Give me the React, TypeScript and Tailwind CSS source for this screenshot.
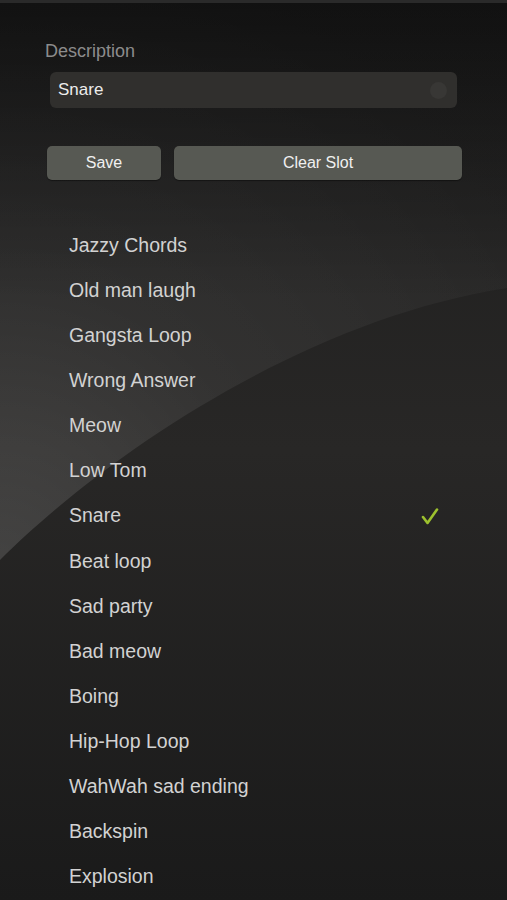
import { useState } from "react"

const sounds = [
  "Jazzy Chords",
  "Old man laugh",
  "Gangsta Loop",
  "Wrong Answer",
  "Meow",
  "Low Tom",
  "Snare",
  "Beat loop",
  "Sad party",
  "Bad meow",
  "Boing",
  "Hip-Hop Loop",
  "WahWah sad ending",
  "Backspin",
  "Explosion",
]

// glossy sweep behind the panel
function Gloss() {
  return (
    <svg className="absolute inset-0 h-full w-full" viewBox="0 0 507 900" preserveAspectRatio="none">
      <defs>
        <radialGradient id="gl" cx="0" cy="560" r="620" gradientUnits="userSpaceOnUse">
          <stop offset="0" stopColor="#ffffff" stopOpacity="0.14" />
          <stop offset="0.45" stopColor="#ffffff" stopOpacity="0.06" />
          <stop offset="1" stopColor="#ffffff" stopOpacity="0.025" />
        </radialGradient>
        <linearGradient id="fade" x1="0" y1="0" x2="0" y2="1">
          <stop offset="0" stopColor="#000" stopOpacity="0.5" />
          <stop offset="0.5" stopColor="#000" stopOpacity="0" />
        </linearGradient>
      </defs>
      <path d="M0,0 L0,560 C100,460 300,320 507,288 L507,0 Z" fill="url(#gl)" />
      <rect x="0" y="0" width="507" height="600" fill="url(#fade)" />
    </svg>
  )
}

function Check() {
  return (
    <svg width="18" height="17" viewBox="0 0 18 17" fill="none">
      <path d="M2 9 L6.5 15 L16 1.5" stroke="#9dc12e" strokeWidth="2.6" strokeLinecap="round" strokeLinejoin="round" />
    </svg>
  )
}

export default function App() {
  const [desc, setDesc] = useState("Snare")
  const [selected, setSelected] = useState("Snare")

  return (
    <div
      className="relative h-[900px] w-full overflow-hidden bg-gradient-to-b from-[#1c1c1c] via-[#282726] to-[#1a1a1a] text-[#d6d6d6]"
      style={{ fontFamily: '"Liberation Sans", Arial, sans-serif' }}
    >
      <Gloss />
      <div className="relative z-10 flex flex-col">
        <div className="h-[3px] bg-[#2a2a2a]" />
        <label className="ml-[45px] mt-[38px] text-[18px] leading-[20px] text-[#8c8c8c]">Description</label>
        <div className="mx-[50px] mt-[11px] flex h-[36px] items-center rounded-[6px] bg-[#302f2d] pl-[8px] pr-[10px]">
          <input
            value={desc}
            onChange={(e) => setDesc(e.target.value)}
            className="flex-1 bg-transparent text-[17px] text-[#ececec] outline-none"
          />
          <span className="h-[17px] w-[17px] rounded-full bg-[#383735]" />
        </div>

        <div className="ml-[47px] mr-[45px] mt-[38px] flex gap-[13px]">
          <button className="h-[34px] w-[114px] rounded-[5px] bg-[#575953] text-[16px] text-[#f0f0f0] shadow-[0_1px_1px_rgba(0,0,0,0.4)]">
            Save
          </button>
          <button className="h-[34px] flex-1 rounded-[5px] bg-[#575953] text-[16px] text-[#f0f0f0] shadow-[0_1px_1px_rgba(0,0,0,0.4)]">
            Clear Slot
          </button>
        </div>

        <ul className="mt-[43px] flex flex-col">
          {sounds.map((s) => (
            <li
              key={s}
              onClick={() => setSelected(s)}
              className="flex h-[45.1px] cursor-pointer items-center justify-between pl-[69px] pr-[68px] text-[19.5px] text-[#d2d2d2]"
            >
              <span>{s}</span>
              {selected === s && <Check />}
            </li>
          ))}
        </ul>
      </div>
    </div>
  )
}
